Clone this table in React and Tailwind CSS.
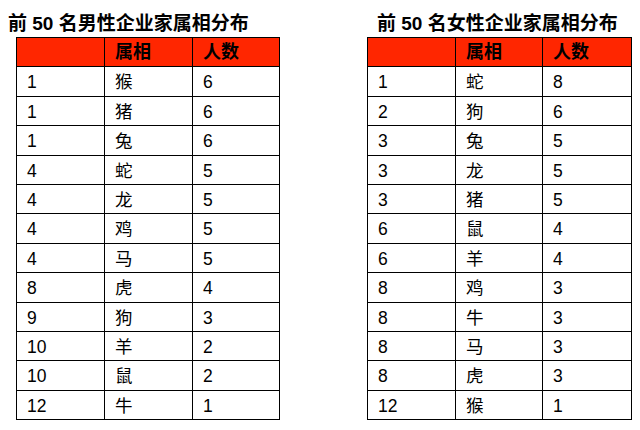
const male = [
  ["1", "猴", "6"],
  ["1", "猪", "6"],
  ["1", "兔", "6"],
  ["4", "蛇", "5"],
  ["4", "龙", "5"],
  ["4", "鸡", "5"],
  ["4", "马", "5"],
  ["8", "虎", "4"],
  ["9", "狗", "3"],
  ["10", "羊", "2"],
  ["10", "鼠", "2"],
  ["12", "牛", "1"],
];

const female = [
  ["1", "蛇", "8"],
  ["2", "狗", "6"],
  ["3", "兔", "5"],
  ["3", "龙", "5"],
  ["3", "猪", "5"],
  ["6", "鼠", "4"],
  ["6", "羊", "4"],
  ["8", "鸡", "3"],
  ["8", "牛", "3"],
  ["8", "马", "3"],
  ["8", "虎", "3"],
  ["12", "猴", "1"],
];

const ZodiacTable = ({ rows, cols }) => (
  <div className="border-l border-t border-black">
    <div className={`grid ${cols} h-[29.4px] bg-[#ff2600]`}>
      <div className="border-r border-b border-black" />
      <div className="border-r border-b border-black pl-[10px] flex items-center pt-[1px] font-bold text-[18px]">属相</div>
      <div className="border-r border-b border-black pl-[10px] flex items-center pt-[1px] font-bold text-[18px]">人数</div>
    </div>
    {rows.map((r, idx) => (
      <div key={idx} className={`grid ${cols} h-[29.4px]`}>
        {r.map((cell, j) => (
          <div
            key={j}
            className="border-r border-b border-black pl-[10px] flex items-center pt-[2px] text-[17.5px]"
          >
            {cell}
          </div>
        ))}
      </div>
    ))}
  </div>
);

export default function App() {
  return (
    <div className="w-[640px] h-[430px] bg-white text-black font-['Liberation_Sans','Noto_Sans_CJK_SC',sans-serif] flex">
      <div className="w-[320px] pt-[10px]">
        <h1 className="pl-[8px] h-[27px] text-[19px] font-bold leading-[27px]">前 50 名男性企业家属相分布</h1>
        <div className="ml-[16px] w-[264px]">
          <ZodiacTable rows={male} cols="grid-cols-[88px_88px_87px]" />
        </div>
      </div>
      <div className="w-[320px] pt-[10px]">
        <h1 className="pl-[57px] h-[27px] text-[19px] font-bold leading-[27px]">前 50 名女性企业家属相分布</h1>
        <div className="ml-[47px] w-[265px]">
          <ZodiacTable rows={female} cols="grid-cols-[88px_87px_89px]" />
        </div>
      </div>
    </div>
  );
}
